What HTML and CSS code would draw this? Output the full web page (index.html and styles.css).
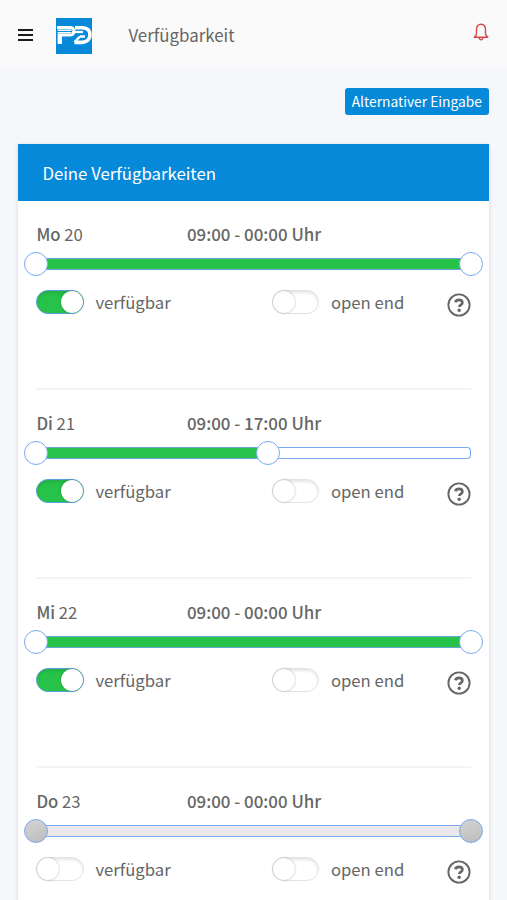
FILE: index.html
```
<!DOCTYPE html>
<html lang="de">
<head>
    <meta charset="UTF-8">
    <meta name="viewport" content="width=device-width, initial-scale=1.0">
    <title>Verfügbarkeit</title>
    <link rel="stylesheet" href="styles.css">
</head>
<body>
    <svg class="sprite">
        <symbol id="icon-help" viewBox="0 0 24 24">
            <circle cx="12" cy="12" r="10.6" fill="none" stroke="currentColor" stroke-width="1.9"/>
            <path d="M8.2 9.3c.7-1.6 2-2.4 3.7-2.4 2 0 3.5 1.1 3.5 2.8 0 2.1-3.1 2.2-3.1 4.3" fill="none" stroke="currentColor" stroke-width="2.6"/>
            <circle cx="12.2" cy="17.2" r="1.7" fill="currentColor"/>
        </symbol>
    </svg>

    <header class="topbar">
        <button class="menu-btn" aria-label="Menü">
            <span></span>
            <span></span>
            <span></span>
        </button>
        <svg class="logo" viewBox="0 0 36 36">
            <rect width="36" height="36" fill="#0689d8"/>
            <g fill="none" stroke="#fff">
                <path d="M1 9.5h12.500q4.500 0 4.500 3.800t-4.500 3.700H5" stroke-width="2.800"/>
                <path d="M1.500 12.200h14M1.500 14.600h14" stroke-width="1.400"/>
                <path d="M3.800 15.500v10.500" stroke-width="4.400"/>
                <path d="M19 9.700h7.500q7.500.5 7.500 7t-7.500 7.700H18.500" stroke-width="3.600"/>
                <path d="M16 14h11" stroke-width="2.200"/>
                <path d="M24 18.500h5M18.500 24l5.500-5.500" stroke-width="2.400"/>
            </g>
        </svg>
        <h1 class="page-title">Verfügbarkeit</h1>
        <svg class="bell" viewBox="0 0 16 18" fill="none" stroke="#d24a4a" stroke-width="1.4" stroke-linejoin="round">
            <path d="M8 1.2C5 1.2 3.5 3.4 3.5 6.5v4c0 1.5-.8 2.5-2.3 3.7h13.6c-1.5-1.2-2.3-2.2-2.3-3.7v-4C12.5 3.4 11 1.2 8 1.2z"/>
            <path d="M6 14.5c.2 1.5 1 2.2 2 2.2s1.8-.7 2-2.2"/>
        </svg>
    </header>

    <main class="content">
        <div class="actions">
            <button class="btn">Alternativer Eingabe</button>
        </div>

        <section class="card">
            <h2 class="card-header">Deine Verfügbarkeiten</h2>
            <div id="days"></div>
        </section>
    </main>

    <script>
        const days = [
            { name: 'Mo', date: 20, time: '09:00 - 00:00 Uhr', end: 100, available: true },
            { name: 'Di', date: 21, time: '09:00 - 17:00 Uhr', end: 53.33, available: true },
            { name: 'Mi', date: 22, time: '09:00 - 00:00 Uhr', end: 100, available: true },
            { name: 'Do', date: 23, time: '09:00 - 00:00 Uhr', end: 100, available: false }
        ];

        // Render one block per day
        document.getElementById('days').innerHTML = days.map(day => `
            <div class="day">
                <div class="day-head">
                    <div class="day-name"><b>${day.name}</b> ${day.date}</div>
                    <div class="day-time">${day.time}</div>
                </div>
                <div class="slider ${day.available ? '' : 'disabled'}">
                    <div class="slider-range" style="width: ${day.end}%"></div>
                    <span class="handle" style="left: 0%"></span>
                    <span class="handle" style="left: ${day.end}%"></span>
                </div>
                <div class="day-options">
                    <div class="option">
                        <span class="toggle ${day.available ? 'on' : ''}"></span>
                        <span>verfügbar</span>
                    </div>
                    <div class="option">
                        <span class="toggle"></span>
                        <span>open end</span>
                    </div>
                    <svg class="help"><use href="#icon-help"/></svg>
                </div>
            </div>
        `).join('');
    </script>
</body>
</html>
```
FILE: styles.css
```
* {
    margin: 0;
    padding: 0;
    box-sizing: border-box;
}

body {
    font-family: "Noto Sans CJK SC", "Open Sans", sans-serif;
    font-size: 16.7px;
    line-height: 24px;
    color: #666;
    background: #f5f7fb;
    height: 100vh;
    overflow: hidden;
}

button {
    border: none;
    font-family: inherit;
}

.sprite {
    display: none;
}

.topbar {
    display: flex;
    align-items: center;
    height: 68px;
    padding: 2px 18px 0 18px;
    background: #fafafa;
}

.menu-btn {
    display: flex;
    flex-direction: column;
    gap: 2.6px;
    width: 15px;
    margin-right: 23px;
    background: none;
}

.menu-btn span {
    height: 2.4px;
    background: #1c1c1c;
}

.logo {
    width: 36px;
    height: 36px;
    margin: 1px 36.4px 0 0;
}

.page-title {
    font-size: 16.9px;
    font-weight: 400;
}

.bell {
    width: 16px;
    height: 18px;
    margin: -6px 0 0 auto;
}

.content {
    height: calc(100vh - 68px);
    padding: 20px 18px 0 18.4px;
    overflow: hidden;
}

.actions {
    display: flex;
    justify-content: flex-end;
    margin-bottom: 29px;
}

.btn {
    height: 27px;
    padding: 0 7px;
    border-radius: 3px;
    background: #0689d8;
    color: #fff;
    font-size: 13.8px;
    line-height: 27px;
    white-space: nowrap;
}

.card {
    background: #fff;
    box-shadow: 0 1px 4px rgba(0, 0, 0, 0.15);
}

.card-header {
    height: 57px;
    padding-left: 24px;
    background: #0689d8;
    color: #fff;
    font-size: 16.8px;
    font-weight: 400;
    line-height: 58px;
}

.day {
    height: 189px;
    margin: 0 18px;
    padding-top: 21px;
    border-bottom: 2px solid #f3f5f5;
}

.day-head {
    display: flex;
}

.day-name {
    width: 150.5px;
}

.day-name b,
.day-time {
    font-weight: 500;
}

.day-time {
    font-size: 16.9px;
}

.slider {
    position: relative;
    height: 12px;
    margin-top: 12px;
    border-radius: 4px;
    background: #fff;
    box-shadow: inset 0 0 0 1px #7aaaf0;
}

.slider-range {
    height: 12px;
    border-radius: 4px;
    background: #26c249;
    box-shadow: inset 0 0 0 1px #6aa8d8;
}

.handle {
    position: absolute;
    top: -6px;
    width: 24px;
    height: 24px;
    margin-left: -12px;
    border: 1px solid #7aaaf0;
    border-radius: 50%;
    background: #fff;
}

.slider.disabled .slider-range {
    background: #ebe8eb;
    box-shadow: inset 0 0 0 1px #7aaaf0;
}

.slider.disabled .handle {
    background: linear-gradient(160deg, #d4d4d4, #bcbcbc);
}

.day-options {
    display: flex;
    align-items: center;
    height: 24px;
    margin-top: 20px;
}

.option {
    display: flex;
    align-items: center;
    gap: 11.5px;
    width: 235.5px;
}

.option + .option {
    width: auto;
}

.toggle {
    display: flex;
    width: 47.5px;
    height: 24px;
    border: 1px solid #e2e2e2;
    border-radius: 12px;
    background: #fff;
    box-shadow: inset 0 2px 3px rgba(0, 0, 0, 0.1);
}

.toggle::after {
    content: "";
    width: 22px;
    height: 22px;
    border-radius: 50%;
    background: #fff;
    box-shadow: 0 0 2px rgba(0, 0, 0, 0.35);
}

.toggle.on {
    justify-content: flex-end;
    border-color: #5a9fdc;
    background: #26c249;
}

.help {
    width: 24px;
    height: 24px;
    margin: 5px 0 0 auto;
}
```
